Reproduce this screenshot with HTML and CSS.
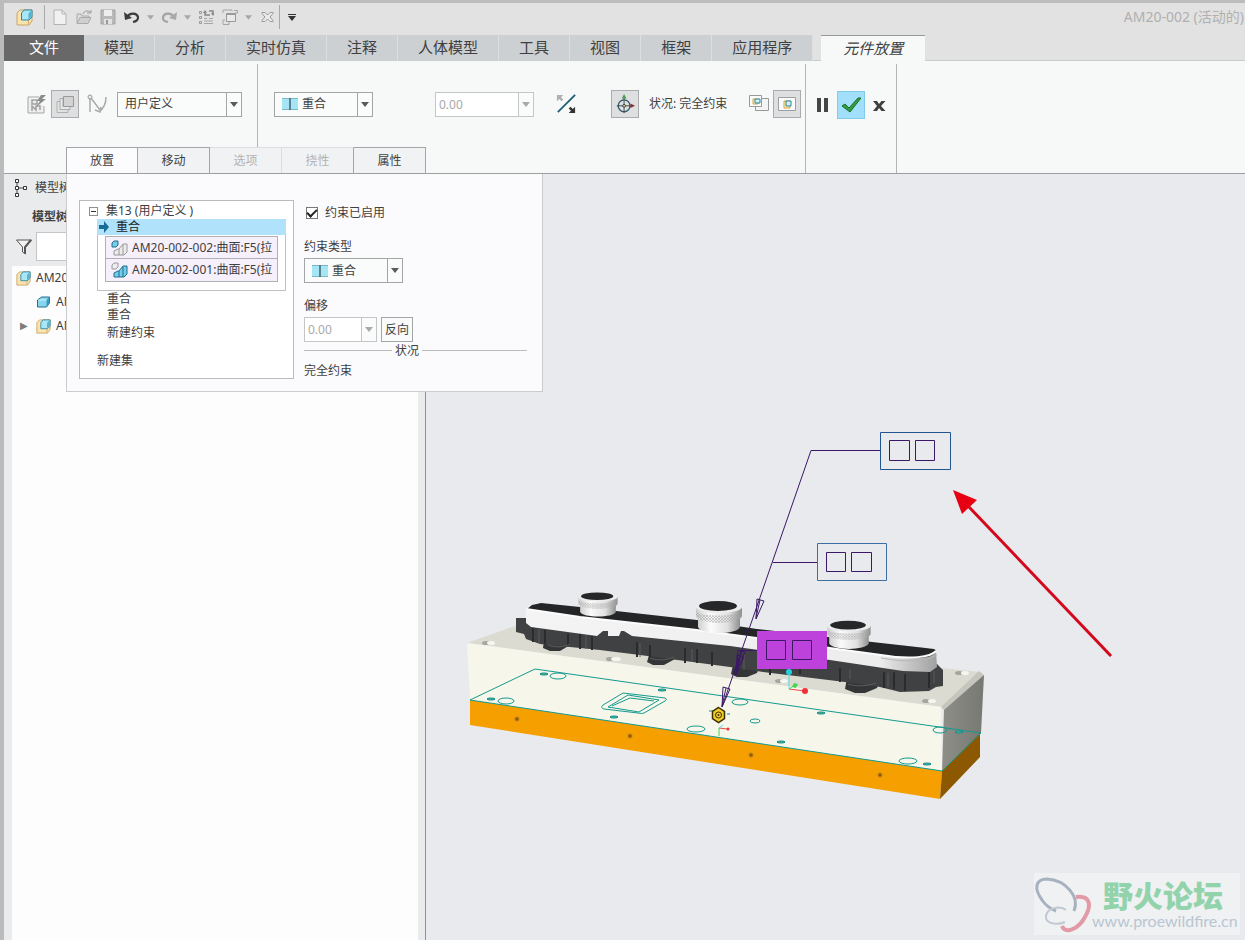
FILE: index.html
```html
<!DOCTYPE html>
<html lang="zh-CN">
<head>
<meta charset="utf-8">
<title>AM20-002 (活动的)</title>
<link rel="stylesheet" href="styles.css">
</head>
<body>
<svg class="defs" aria-hidden="true">
  <defs>
    <symbol id="i-asm" viewBox="0 0 17 17"><path d="M1 4l3-3h12v11l-3 4H1z" fill="#fbe3ae" stroke="#c9a566"/><path d="M12.500 6v10" fill="none" stroke="#d5ad6c"/><path d="M5.500 4l2.500-3h8v7l-3 3H5.500z" fill="#a8e6f8" stroke="#2f87a5"/><path d="M12.500 4.500l3-3v6l-3 3z" fill="#55b2d0"/></symbol>
    <symbol id="i-part" viewBox="0 0 14 14"><path d="M1 5l4-3h8v6l-3 4H1z" fill="#86d6f0" stroke="#256f8c"/><path d="M10 5l3-3v6l-3 4z" fill="#3b9abb"/><path d="M2 5h8" stroke="#d4f4fc"/></symbol>
    <symbol id="i-coin" viewBox="0 0 16 12"><path d="M0 0h16v12H0z" fill="#a5e6f6"/><path d="M0 .5h16M0 11.5h16" stroke="#7fb6c6"/><path d="M8 0v12" stroke="#44636e" stroke-width="1.5"/></symbol>
    <symbol id="i-caret" viewBox="0 0 8 5"><path d="M0 0h8L4 5z" fill="currentColor"/></symbol>
    <symbol id="i-win" viewBox="0 0 18 14"><path d="M.5.5h17v13H.5z" fill="#fbfbfb" stroke="#9c9fa2"/><path d="M6 4h6v7H6z" fill="#fff3c4" stroke="#d8a33c"/><path d="M8 4h5v5H8z" fill="#d2f2f8" stroke="#29879d"/></symbol>
  </defs>
</svg>

<header class="titlebar">
  <svg class="app-icon"><use href="#i-asm"/></svg>
  <span class="sep"></span>
  <div class="quick">
    <button aria-label="新建"><svg viewBox="0 0 16 16"><path d="M2 1h8l4 4v10.500H2z" fill="#f1f1f1" stroke="#b3b3b3"/><path d="M10 1v4h4" fill="none" stroke="#b3b3b3"/></svg></button>
    <button aria-label="打开"><svg viewBox="0 0 16 16"><path d="M1 14V5h4l1 2h7v2" fill="#ddd" stroke="#aaa"/><path d="M1 14.500l3-6h11l-3 6z" fill="#cfcfcf" stroke="#aaa"/><path d="M7 5c1-3 4-4 7-2m1-2v3h-4" fill="none" stroke="#999"/></svg></button>
    <button aria-label="保存"><svg viewBox="0 0 16 16"><path d="M1 1h14v14H1z" fill="#b9b9b9" stroke="#a3a3a3"/><path d="M4 1h8v6H4z" fill="#ededed"/><path d="M4 10h8v5H4z" fill="#e2e2e2"/><path d="M6 11h2v4H6z" fill="#999"/></svg></button>
    <button aria-label="撤消"><svg viewBox="0 0 16 16"><path d="M3 8c3-5 10-4 11 0 .5 3-2 4.500-5 5" fill="none" stroke="#3c3c3c" stroke-width="2.200"/><path d="M0 3l1 8 7-2z" fill="#3c3c3c"/></svg></button>
    <button class="drop" aria-label="撤消列表"><svg><use href="#i-caret"/></svg></button>
    <button aria-label="重做"><svg viewBox="0 0 16 16"><path d="M13 8C10 3 3 4 2 8c-.5 3 2 4.500 5 5" fill="none" stroke="#a3a3a3" stroke-width="2.200"/><path d="M16 3l-1 8-7-2z" fill="#a9a9a9"/></svg></button>
    <button class="drop" aria-label="重做列表"><svg><use href="#i-caret"/></svg></button>
    <button class="shift" aria-label="重新生成"><svg viewBox="0 0 16 16"><path d="M1.500 2.500h2v2h-2zM1.500 7.500h2v2h-2zM1.500 12.500h2v2h-2z" fill="none" stroke="#999"/><path d="M6 9.500h3M11 9.500h4M6 12h9M6 14.500h9" stroke="#a5a5a5"/><path d="M7 3v3h5M15 5V2h-4" fill="none" stroke="#888" stroke-width="1.500"/><path d="M5 4l2-3 2 3zM13 4h4l-2 3z" fill="#888"/></svg></button>
    <button class="shift" aria-label="窗口"><svg viewBox="0 0 16 16"><path d="M1 4V1h9v1M1 15v-4h2M7 13v2.500H1M13 4h2.500V1.500H12" fill="none" stroke="#a5a5a5"/><path d="M4.500 4.500h9v8h-9z" fill="#e9e9e9" stroke="#999"/><path d="M5 5.500h8" stroke="#999"/></svg></button>
    <button class="drop" aria-label="窗口列表"><svg><use href="#i-caret"/></svg></button>
    <button aria-label="关闭"><svg viewBox="0 0 16 16"><path d="M3 3.500h3l2.500 2.500L11 3.500h3v1L11 8l3 3.500v1h-3L8.500 10 6 12.500H3v-1L6 8 3 4.500z" fill="#eaeaea" stroke="#999"/></svg></button>
    <span class="sep tight"></span>
    <button class="drop dark" aria-label="自定义"><svg viewBox="0 0 8 7"><path d="M0 .5h8" stroke="currentColor"/><path d="M0 2h8L4 7z" fill="currentColor"/></svg></button>
  </div>
  <h1 class="title">AM20-002 (活动的)</h1>
</header>

<nav class="tabs">
  <a class="file" href="#">文件</a>
  <a href="#">模型</a>
  <a href="#">分析</a>
  <a href="#">实时仿真</a>
  <a href="#">注释</a>
  <a href="#">人体模型</a>
  <a href="#">工具</a>
  <a href="#">视图</a>
  <a href="#">框架</a>
  <a href="#">应用程序</a>
  <a class="current" href="#">元件放置</a>
</nav>

<section class="ribbon">
  <div class="dashboard">
    <div class="tools">
      <div class="group kind">
        <button class="tool" aria-label="界面放置"><svg viewBox="0 0 20 20"><path d="M1 3h11M1 3v16h16v-7" fill="#eee" stroke="#a5a5a5"/><path d="M5 6h5v4H5zM5 17v-5l4 4v-4h4v4" fill="none" stroke="#a0a0a0" stroke-width="1.500"/><path d="M14 1h5l-4 4h4L9 13l4-6h-3z" fill="#8b8b8b"/></svg></button>
        <button class="tool pressed" aria-label="手动放置"><svg viewBox="0 0 20 20"><path d="M2 7.500h4v7h7v4H2z" fill="#e2e2e2" stroke="#b0b0b0"/><path d="M5 4.500h3v8h7v3H5z" fill="#e8e8e8" stroke="#aaa"/><path d="M8.500 2.500h10v10h-10z" fill="#d3d3d3" stroke="#999"/></svg></button>
        <button class="tool gap" aria-label="转换"><svg viewBox="0 0 20 20"><path d="M3 4v14M4 4l9 12" stroke="#aaa" stroke-width="1.500"/><circle cx="3" cy="3" r="2" fill="#eee" stroke="#999"/><path d="M12 18c4-3 7-8 7-15M8 16l5 2 1-5" fill="none" stroke="#aaa" stroke-width="1.500"/></svg></button>
        <div class="combo wide"><select aria-label="约束集类型"><option>用户定义</option></select><svg class="caret"><use href="#i-caret"/></svg></div>
      </div>
      <div class="group">
        <div class="combo icon"><svg class="lead"><use href="#i-coin"/></svg><select aria-label="约束类型"><option>重合</option></select><svg class="caret"><use href="#i-caret"/></svg></div>
        <div class="combo off value"><input type="text" value="0.00" aria-label="偏移值" disabled><svg class="caret"><use href="#i-caret"/></svg></div>
        <button class="tool" aria-label="反向约束"><svg viewBox="0 0 22 22"><path d="M2 20L21 1" stroke="#1e5f78" stroke-width="2"/><path d="M1 1h7L5.500 3.500 8 6 6 8 3.500 5.500 1 8z" fill="#b0b0b0"/><path d="M21 21h-7l2.500-2.500L14 16l2-2 2.500 2.500L21 14z" fill="#333"/></svg></button>
        <button class="tool pressed orient" aria-label="显示拖动器"><svg viewBox="0 0 22 22"><circle cx="10" cy="13" r="6.500" fill="none" stroke="#33596d" stroke-width="1.500"/><path d="M10 21V3M2 13h16" stroke="#33474f"/><path d="M10 0l2.500 5h-5z" fill="#4a9a4a"/><path d="M22 13l-5-2.500v5z" fill="#8b2f2f"/><circle cx="10" cy="13" r="1.500" fill="#f0e6a0" stroke="#333"/></svg></button>
        <output class="state">状况: 完全约束</output>
        <button class="tool" aria-label="单独窗口"><svg viewBox="0 0 20 20"><path d="M6.500 4.500h13v12h-13z" fill="#f4f4f4" stroke="#999"/><path d="M.5 1.500h12v11H.5z" fill="#fbfbfb" stroke="#999"/><path d="M4 5h5v5H4z" fill="#fff3c4" stroke="#d8a33c"/><path d="M6 5h5v4H6z" fill="#d2f2f8" stroke="#29879d"/></svg></button>
        <button class="tool pressed" aria-label="主窗口"><svg class="win"><use href="#i-win"/></svg></button>
      </div>
    </div>
    <div class="subtabs" role="tablist">
      <button role="tab" class="on" aria-selected="true">放置</button>
      <button role="tab">移动</button>
      <button role="tab" disabled>选项</button>
      <button role="tab" disabled>挠性</button>
      <button role="tab">属性</button>
    </div>
  </div>
  <div class="confirm">
    <button class="tool" aria-label="暂停"><svg viewBox="0 0 20 20"><path d="M4 3h4v14H4zM11 3h4v14h-4z" fill="#454545"/></svg></button>
    <button class="tool ok" aria-label="确定"><svg viewBox="0 0 20 20"><path d="M1 11l3-2 4 4L17 3h3L9 17z" fill="#2f9e3f" stroke="#1d6c2b"/></svg></button>
    <button class="tool" aria-label="取消"><svg viewBox="0 0 20 20"><path d="M4 6h4l2 3 2.500-3h4l-4.500 5 4.500 5h-4L10 13l-2 3H4l4-5z" fill="#3f3f3f"/></svg></button>
  </div>
</section>

<main class="work">
  <aside class="sidebar">
    <div class="side-head">
      <div class="side-title"><svg viewBox="0 0 14 20"><path d="M3 4v12M4 10h6" stroke="#444"/><path d="M1.500 1.500h3v3h-3zM1.500 8.500h3v3h-3zM1.500 15.500h3v3h-3zM9.500 8.500h3v3h-3z" fill="#fff" stroke="#333"/></svg>模型树</div>
      <h2>模型树</h2>
      <div class="filter"><svg viewBox="0 0 16 16"><path d="M.5 1h15l-6 7v7l-3-2V8z" fill="#f2f2f2" stroke="#555"/><path d="M15 1L9 8v6" fill="none" stroke="#555" stroke-width="2"/></svg><input type="text" aria-label="过滤"></div>
    </div>
    <ul class="model">
      <li><svg class="asm"><use href="#i-asm"/></svg>AM20</li>
      <li class="child"><svg class="part"><use href="#i-part"/></svg>AM</li>
      <li class="child"><span class="twist">▶</span><svg class="asm"><use href="#i-asm"/></svg>AM</li>
    </ul>
  </aside>

  <section class="viewport" aria-label="图形窗口">
    <svg class="scene">
      <defs>
        <linearGradient id="side" x1="0" x2="1"><stop offset="0" stop-color="#8e8f89"/><stop offset="1" stop-color="#777872"/></linearGradient>
        <linearGradient id="metal" x1="0" x2="1"><stop offset="0" stop-color="#cfcfcf"/><stop offset=".3" stop-color="#fbfbfb"/><stop offset=".7" stop-color="#e0e0e0"/><stop offset="1" stop-color="#8e8e8e"/></linearGradient>
        <linearGradient id="rail" x1="0" x2="1"><stop offset="0" stop-color="#f4f4f4"/><stop offset=".86" stop-color="#ededed"/><stop offset="1" stop-color="#a0a0a0"/></linearGradient>
        <pattern id="knurl" width="3" height="3" patternUnits="userSpaceOnUse"><path d="M0 0l3 3M3 0L0 3" stroke="#9c9c9c" stroke-width=".5"/></pattern>
        <g id="knob">
          <path d="M-21 10v10c3 8 39 8 42 0V10z" fill="url(#metal)"/>
          <path d="M-23 0v9c2 9 44 9 46 0V0z" fill="url(#metal)"/>
          <path d="M-23 4v5c2 9 44 9 46 0V4c-3 6-43 6-46 0z" fill="url(#knurl)"/>
          <ellipse rx="23" ry="6" fill="#ececec"/>
          <ellipse cx="-1" cy="-1" rx="19" ry="5" fill="#262728"/>
        </g>
        <path id="cone" d="M-1-17l7 2-8 18zM2-16l-4 18" fill="none" stroke="#3a1866"/>
      </defs>
      <g transform="translate(-426 -174)">
        <path d="M467 643l51-18 462 47-37 35z" fill="#dbdbd1"/>
        <path d="M467 643l474 64 1 64-472-71z" fill="#f6f6eb"/>
        <path d="M941 707l38-36 5 4-39 36z" fill="#c6c6be"/>
        <path d="M944 710l40-35-3 58-39 38z" fill="url(#side)"/>
        <path d="M470 700l472 71-2 28-470-74z" fill="#f59f00"/>
        <path d="M942 771l38-38v24l-40 42z" fill="#8c5802"/>
        <g fill="#a5a69e"><ellipse cx="486" cy="643" rx="4" ry="2"/><ellipse cx="610" cy="659" rx="4" ry="2"/><ellipse cx="779" cy="681" rx="4" ry="2"/><ellipse cx="959" cy="673" rx="4" ry="2"/><ellipse cx="926" cy="701" rx="4" ry="2"/></g>
        <g fill="#f6f6f0"><ellipse cx="491" cy="643" rx="4" ry="2"/><ellipse cx="616" cy="659" rx="5" ry="2"/><ellipse cx="784" cy="681" rx="4" ry="2"/><ellipse cx="965" cy="673" rx="4" ry="2"/><ellipse cx="932" cy="701" rx="4" ry="2"/></g>

        <g fill="#343536"><path d="M544 640h27l-1 5-10 6h-10l-7-3z"/><path d="M650 652l28 3-3 4-11 6h-11l-6-3z"/><path d="M733 665l26 2-2 6-10 4h-10l-6-3z"/><path d="M847 678l32 4-2 6-12 5h-10l-10-4z"/></g>
        <path d="M516 618h12l300 30 109 16 6 6v16l-7 1-7 4-29 1-20-5-27-4-90-11-33-5-90-12-40-5-60-6-14-5-2-5-8-2z" fill="#404142"/>
        <path d="M533 628v14M545 630v14M568 634v12M580 634v15M592 636v14M637 642v15M650 645v13M685 648v15M697 649v14M712 652v14M770 660v15M800 662v12M840 668v14M884 672v16M894 672v17M905 674v17M929 672v16" stroke="#2a2b2c" stroke-width="2"/>
        <path d="M539 629v14M586 635v14M640 643v14M692 649v13M744 655v15M850 670v9M888 673v14M934 671v12" stroke="#5c5d5e"/>
        <path d="M548 645c8 3 16 2 22-1M650 658c8 3 18 2 24-1M848 684c10 3 20 2 28-1" fill="none" stroke="#5b5c5d"/>
        <path d="M526 608l10-5 390 45 10 3 1 16-7 5-27-1-73-11-100-14-98-10-8-5h-3l-2 5h-11v-5h-5l-6 5-66-9-5-4z" fill="url(#rail)"/>
        <path d="M527 609l5-4 9-2 39 4 117 13 60 9 177 20c4 2 1 6-6 8-14 2-25 1-47-2l-184-25-117-13z" fill="#242526"/>
        <path d="M526 609l54 8 117 13 184 25c30 5 50 2 55-4" fill="none" stroke="#fcfcfc" stroke-width="2"/>
        <path d="M881 658c26 5 45 3 56-3" fill="none" stroke="#b9b9b9"/>
        <use href="#knob" transform="translate(598 597) scale(.85 .75)"/>
        <use href="#knob" transform="translate(719 607)"/>
        <use href="#knob" transform="translate(849 626) scale(.94 .88)"/>

        <g fill="none" stroke="#169a8e" stroke-width="1">
          <path d="M470 700l65-31 446 64-39 38z"/>
          <path d="M603 705l20-12 42 5q3 1 0 3l-21 12q-2 1-6 0l-34-4q-4-1-1-4zM608 707l20-12 31 5-20 12zM612 706l18-8 24 3"/>
          <ellipse cx="558" cy="676" rx="8" ry="3"/><ellipse cx="506" cy="701" rx="8" ry="3"/><ellipse cx="696" cy="729" rx="9" ry="3"/><ellipse cx="740" cy="702" rx="8" ry="3"/><ellipse cx="755" cy="721" rx="5" ry="2"/><ellipse cx="908" cy="761" rx="9" ry="3"/><ellipse cx="940" cy="730" rx="7" ry="3"/>
        </g>
        <g fill="#58b8ac" stroke="#128f83"><ellipse cx="544" cy="674" rx="4" ry="1"/><ellipse cx="491" cy="699" rx="4" ry="1"/><ellipse cx="662" cy="690" rx="4" ry="1"/><ellipse cx="614" cy="717" rx="4" ry="1"/><ellipse cx="821" cy="713" rx="4" ry="1"/><ellipse cx="781" cy="742" rx="4" ry="1"/><ellipse cx="927" cy="764" rx="4" ry="1"/><ellipse cx="959" cy="732" rx="4" ry="1"/><path d="M709 711h4M727 714h3"/></g>
        <g fill="#8a5b0c" stroke="#b97d16"><circle cx="517" cy="719" r="2"/><circle cx="630" cy="736" r="2"/><circle cx="751" cy="755" r="2"/><circle cx="880" cy="775" r="2"/></g>

        <path d="M880 450.500h-69L722 707M817 562.500h-44M757 650.500h-15l-7 25" fill="none" stroke="#3a1866"/>
        <use href="#cone" x="758" y="616"/><use href="#cone" x="739" y="667"/><use href="#cone" x="738" y="672"/><use href="#cone" x="724" y="704"/>
        <g fill="none" stroke="#3d6fa3"><path d="M880.500 432.500h70v37h-70z" stroke="#22558f"/><path d="M817.500 543.500h69v37h-69z"/></g>
        <path d="M757 631h70v38h-70z" fill="#bd42dc"/>
        <g fill="none" stroke="#3a1866"><path d="M889.500 440.500h20v20h-20zM915.500 440.500h19v20h-19zM826.500 552.500h19v19h-19zM851.500 552.500h20v19h-20zM766.500 640.500h19v19h-19zM792.500 640.500h19v19h-19z"/></g>

        <path d="M789 673v16" stroke="#55dfe8"/><path d="M789 689l16 2" stroke="#f04545"/><path d="M789 689l6-4" stroke="#4ed85a"/>
        <circle cx="789" cy="672" r="3" fill="#25cfe0"/><circle cx="805" cy="691" r="3" fill="#f22f3a"/><path d="M792 687l2-4 4 1-2 4z" fill="#45d64f"/>
        <path d="M719 736v-8" stroke="#45d64f"/><path d="M719 728l8 1" stroke="#f04545"/><path d="M719 728l4-3" stroke="#55dfe8"/><circle cx="728" cy="729" r="1.500" fill="#e33"/>
        <path d="M718.500 707.500l6 4v7l-6 4-6-4v-7z" fill="#f2cb2c" stroke="#3a3000" stroke-width="1.500"/><circle cx="718.500" cy="715" r="3" fill="none" stroke="#3a3000"/><circle cx="718.500" cy="715" r="1" fill="#3a3000"/>

        <path d="M969 507l142 149" stroke="#d4081c" stroke-width="3"/>
        <path d="M953 490l24 10-15 14z" fill="#e60012"/>
      </g>
    </svg>
    <div class="watermark">
      <svg viewBox="0 0 58 58"><g fill="none"><path d="M40 36C46 22 32 5 13 4 1 4 0 14 8 25c4 6 9 9 14 11" stroke="#a7b2c1" stroke-width="3"/><path d="M31 47c-9 4-20 1-19-6 1-8 14-11 20-6" stroke="#c0c8d1" stroke-width="2"/><path d="M42 22c14-2 16 8 9 20-7 13-20 17-23 9" stroke="#e29ba5" stroke-width="4"/></g></svg>
      <p><strong>野火论坛</strong><span>www.proewildfire.cn</span></p>
    </div>
  </section>

  <section class="panel" role="tabpanel" aria-label="放置">
    <div class="sets">
      <div class="set"><button class="minus" aria-label="折叠"></button>集13 (用户定义 )</div>
      <div class="members">
        <div class="active"><svg viewBox="0 0 10 12"><path d="M0 4h5V0l5 6-5 6V8H0z" fill="#176c98"/></svg>重合</div>
        <div class="refs">
          <div class="ref"><svg viewBox="0 0 17 16"><path d="M1 3l2-2h4v4L5 7H1z" fill="#74cde9" stroke="#216d8a"/><path d="M3 15v-4l4-2h1l4-5h4v8l-3 3z" fill="#ececec" stroke="#999"/><path d="M12 5v10M8 9v6" stroke="#999"/></svg><span>AM20-002-002:曲面:F5(拉</span></div>
          <div class="ref"><svg viewBox="0 0 17 16"><path d="M1 3l2-2h4v4L5 7H1z" fill="#ececec" stroke="#999"/><path d="M3 15v-4l4-2h1l4-5h4v8l-3 3z" fill="#74cde9" stroke="#216d8a"/><path d="M12 5v10M8 9v6" stroke="#216d8a"/></svg><span>AM20-002-001:曲面:F5(拉</span></div>
        </div>
        <ul>
          <li>重合</li>
          <li>重合</li>
          <li class="new">新建约束</li>
        </ul>
      </div>
      <div class="new-set">新建集</div>
    </div>
    <div class="details">
      <label class="check"><input type="checkbox" checked>约束已启用</label>
      <label class="cap" for="ctype">约束类型</label>
      <div class="combo icon"><svg class="lead"><use href="#i-coin"/></svg><select id="ctype"><option>重合</option></select><svg class="caret"><use href="#i-caret"/></svg></div>
      <label class="cap" for="offset">偏移</label>
      <div class="row">
        <div class="combo off short"><input type="text" id="offset" value="0.00" disabled><svg class="caret"><use href="#i-caret"/></svg></div>
        <button class="flip">反向</button>
      </div>
      <div class="rule">状况</div>
      <p class="result">完全约束</p>
    </div>
  </section>
</main>
</body>
</html>
```
FILE: styles.css
```css
* { box-sizing: border-box; }

body {
  margin: 0;
  min-height: 100vh;
  display: flex;
  flex-direction: column;
  border-left: 4px solid #b9bbbd;
  border-top: 3px solid #bcbcbc;
  background: #eceeef;
  color: #404040;
  font: 12px/16px "Noto Sans", "Noto Sans CJK SC", sans-serif;
  overflow: hidden;
}

button, input, select { font: inherit; color: inherit; margin: 0; padding: 0; border: 0; background: none; }
h1, h2, p, ul { margin: 0; padding: 0; font-size: inherit; font-weight: normal; list-style: none; }
a { color: inherit; text-decoration: none; }
svg { display: block; flex: none; }
.defs { position: absolute; width: 0; height: 0; }

/* Title bar */
.titlebar { display: flex; align-items: center; height: 32px; padding: 0 0 4px 12px; background: #e2e2e2; }
.app-icon { width: 17px; height: 17px; margin-right: 11px; }
.sep { width: 1px; height: 24px; background: #a9a9a9; margin-right: 3px; }
.sep.tight { margin-right: 5px; }
.quick { display: flex; align-items: center; }
.quick button { width: 24px; height: 24px; display: grid; place-items: center; }
.quick svg { width: 16px; height: 16px; }
.quick .drop { width: 13px; color: #a8a8a8; }
.quick .drop svg { width: 7px; height: 5px; }
.quick .drop.dark { color: #333; }
.quick .drop.dark svg { width: 8px; height: 7px; }
.title { margin-left: auto; padding-right: 1px; font-size: 14px; color: #b0b0b0; white-space: nowrap; }

/* Ribbon tabs */
.tabs { display: flex; height: 26px; background: #e2e2e2; border-bottom: 1px solid #c9cbcc; font-size: 15px; line-height: 25px; white-space: nowrap; }
.tabs a { height: 26px; padding: 0 20px; background: #cdd0d3; border-right: 1px solid #dcdee0; }
.tabs .file { padding: 0 25px; background: #686868; color: #fff; border: 0; }
.tabs .current { margin-left: 8px; padding: 0 22px; background: #f7f8f8; border: 0; border-top: 1px solid #999; font-style: italic; line-height: 24px; }

/* Ribbon */
.ribbon { display: flex; background: #f7f8f8; border-bottom: 1px solid #9c9ea0; padding-top: 3px; margin-bottom: -1px; }
.dashboard { display: flex; flex-direction: column; border-right: 1px solid #b3b5b7; }
.tools { display: flex; height: 83px; padding-right: 4px; }
.group { display: flex; align-items: center; padding-bottom: 3px; }
.kind { padding: 0 15px 3px 19px; margin-right: 16px; border-right: 1px solid #b3b5b7; }
.tool { width: 28px; height: 28px; display: grid; place-items: center; border: 1px solid transparent; flex: none; }
.tool svg { width: 20px; height: 20px; }
.tool .win { width: 18px; height: 14px; }
.tool.pressed { background: #dedfe0; border-color: #a9abad; }
.tool.gap { margin: 0 6px 0 4px; }
.tool.orient { margin: 0 10px 0 31px; }
.state { margin-right: 18px; white-space: nowrap; }
.confirm { display: flex; align-items: center; padding: 0 3px 28px; border-right: 1px solid #b3b5b7; }
.confirm .ok { background: #a2dffa; border-color: #83cbea; }

.combo { position: relative; display: flex; align-items: center; height: 25px; border: 1px solid #a3a5a7; background: #fafbfb; }
.combo select, .combo input { appearance: none; flex: 1; min-width: 0; height: 100%; padding-left: 7px; border-radius: 0; outline: 0; }
.combo .lead { width: 16px; height: 12px; margin-left: 7px; }
.combo.icon select { padding-left: 4px; }
.combo .caret { width: 15px; height: 23px; padding: 9px 3px; border-left: 1px solid #a3a5a7; color: #5a5a5a; pointer-events: none; }
.combo.wide { width: 125px; }
.combo.icon { width: 99px; }
.combo.value { width: 99px; margin: 0 18px 0 62px; }
.combo.short { width: 73px; }
.combo.off { border-color: #c3c5c7; color: #a9a9a9; }
.combo.off input { padding-left: 3px; background: #fff; }
.combo.off .caret { border-color: #c3c5c7; color: #a9a9a9; }

.subtabs { display: flex; padding-left: 62px; height: 27px; margin-bottom: -1px; }
.subtabs button { width: 72px; border: 1px solid #a3a5a7; border-bottom: 0; border-left-width: 0; background: #f1f2f3; }
.subtabs .on { background: #fcfcfe; border-left-width: 1px; }
.subtabs button:disabled { color: #b3b3b3; border-color: #dcdddf; }
.subtabs button:nth-child(4) { border-right-color: #a3a5a7; }

/* Work area */
.work { position: relative; flex: 1; display: flex; border-top: 1px solid #9c9ea0; }
.sidebar { flex: 0 0 34%; display: flex; flex-direction: column; padding: 0 7px 0 8px; border-right: 1px solid #8f9193; background: #e9ebec; }
.side-head { display: flex; flex-direction: column; height: 92px; }
.side-title { display: flex; align-items: center; gap: 7px; height: 28px; padding-left: 2px; }
.side-title svg { width: 14px; height: 20px; }
.side-head h2 { height: 30px; padding: 7px 0 0 20px; font-weight: bold; }
.filter { display: flex; align-items: center; gap: 4px; padding-left: 4px; }
.filter svg { width: 16px; height: 16px; }
.filter input { flex: 1; height: 29px; border: 1px solid #c3c5c7; background: #fff; }
.model { flex: 1; background: #fdfdfe; }
.model li { display: flex; align-items: center; gap: 5px; height: 24px; padding-left: 4px; }
.model .child { position: relative; padding-left: 24px; }
.model .asm { width: 15px; height: 15px; }
.model .part { width: 15px; height: 14px; }
.twist { position: absolute; left: 8px; color: #7d7d7d; font: 10px/16px "DejaVu Sans", sans-serif; }

.viewport { position: relative; flex: 1; background: #e8eaee; overflow: hidden; }
.scene { position: absolute; inset: 0; width: 100%; height: 100%; }

.watermark { position: absolute; right: 5px; bottom: 5px; display: flex; align-items: center; width: 206px; height: 62px; background: #eff1f3; }
.watermark svg { width: 58px; height: 58px; }
.watermark p { display: flex; flex-direction: column; }
.watermark strong { padding-left: 11px; font: 900 30px/34px "Noto Sans CJK SC", sans-serif; color: #93d3ac; }
.watermark span { font: 16px/20px Lato, sans-serif; color: #b9c6d1; white-space: nowrap; }

/* Placement panel */
.panel { position: absolute; left: 62px; top: 0; display: flex; gap: 10px; width: 477px; padding: 26px 15px 12px 12px; background: #fbfbfd; border: 1px solid #c9cbcd; border-top: 0; }
.sets { flex: 0 0 215px; min-width: 0; padding: 2px 7px 9px 9px; border: 1px solid #b9bbbd; background: #fff; white-space: nowrap; }
.set { display: flex; align-items: center; gap: 8px; height: 16px; }
.minus { width: 9px; height: 9px; border: 1px solid #8f9193; background: linear-gradient(#333, #333) center / 5px 1px no-repeat #fff; }
.members { padding-left: 8px; }
.active { display: flex; align-items: center; gap: 7px; height: 16px; padding-left: 2px; background: #b0e2fb; color: #222; }
.active svg { width: 10px; height: 12px; }
.refs { padding: 1px 7px 8px; border: 1px solid #c0c2c4; border-top: 0; }
.ref { display: flex; align-items: center; gap: 4px; height: 23px; padding: 0 2px 0 5px; border: 1px solid #aeb0b2; background: #f5f0fb; }
.ref svg { width: 17px; height: 16px; }
.ref span { flex: 1; min-width: 0; overflow: hidden; }
.ref + .ref { border-top: 0; }
.members ul { padding-left: 10px; }
.members .new { margin-top: 2px; }
.new-set { margin-top: 12px; padding-left: 8px; }

.details { flex: 1; display: flex; flex-direction: column; align-items: flex-start; padding-top: 5px; }
.check { display: flex; align-items: center; gap: 7px; padding-left: 2px; height: 16px; }
.check input { appearance: none; width: 12px; height: 12px; border: 1px solid #777; background: #fff; display: grid; place-items: center; }
.check input:checked::before { content: ""; width: 8px; height: 4px; border: solid #222; border-width: 0 0 2px 2px; transform: rotate(-45deg); margin-bottom: 2px; }
.cap { margin-top: 18px; margin-bottom: 3px; }
.details .cap ~ .cap { margin-top: 15px; }
.row { display: flex; gap: 4px; }
.flip { width: 32px; height: 25px; border: 1px solid #a3a5a7; background: #f9fafa; }
.rule { display: flex; align-items: center; gap: 3px; width: 100%; height: 17px; }
.rule::before, .rule::after { content: ""; height: 1px; background: #b9bbbd; flex: 0 0 88px; }
.rule::after { flex: 1; }
.result { margin-top: 4px; }
```
